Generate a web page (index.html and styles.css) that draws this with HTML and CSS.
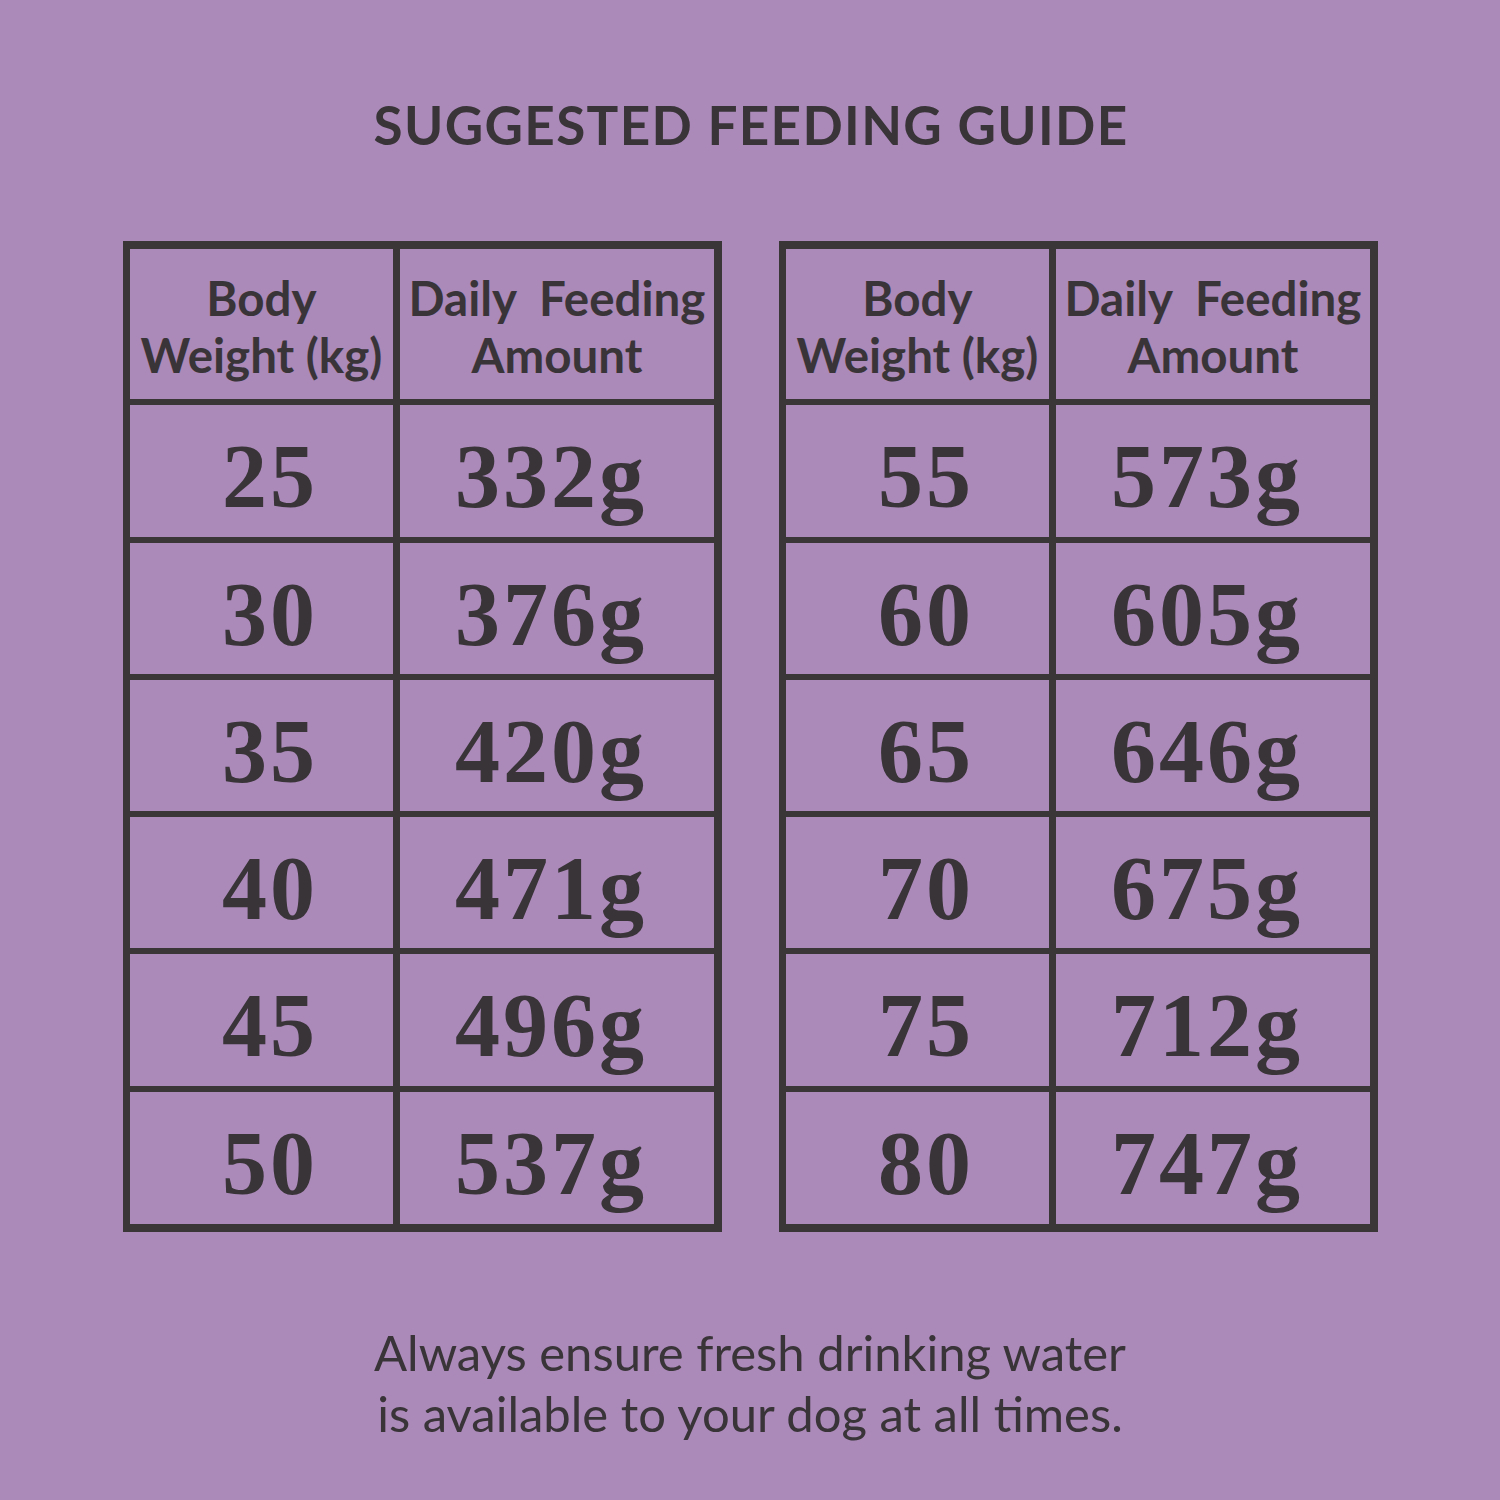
FILE: index.html
```html
<!DOCTYPE html>
<html>
<head>
<meta charset="utf-8">
<link rel="stylesheet" href="styles.css">
</head>
<body>
<div class="page">
  <h1 class="title">SUGGESTED FEEDING GUIDE</h1>
  <div class="tables">
    <div class="grid">
      <div class="cell head c1">Body<br>Weight (kg)</div>
      <div class="cell head c2">Daily&nbsp; Feeding<br>Amount</div>
      <div class="cell num c1">25</div><div class="cell num c2">332g</div>
      <div class="cell num c1">30</div><div class="cell num c2">376g</div>
      <div class="cell num c1">35</div><div class="cell num c2">420g</div>
      <div class="cell num c1">40</div><div class="cell num c2">471g</div>
      <div class="cell num c1">45</div><div class="cell num c2">496g</div>
      <div class="cell num c1">50</div><div class="cell num c2">537g</div>
    </div>
    <div class="grid">
      <div class="cell head c1">Body<br>Weight (kg)</div>
      <div class="cell head c2">Daily&nbsp; Feeding<br>Amount</div>
      <div class="cell num c1">55</div><div class="cell num c2">573g</div>
      <div class="cell num c1">60</div><div class="cell num c2">605g</div>
      <div class="cell num c1">65</div><div class="cell num c2">646g</div>
      <div class="cell num c1">70</div><div class="cell num c2">675g</div>
      <div class="cell num c1">75</div><div class="cell num c2">712g</div>
      <div class="cell num c1">80</div><div class="cell num c2">747g</div>
    </div>
  </div>
  <p class="note">Always ensure fresh drinking water<br>is available to your dog at all times.</p>
</div>
</body>
</html>
```

FILE: styles.css
```css
html, body {
  margin: 0;
  padding: 0;
}
body {
  background: #ab89b9;
  color: #393438;
}
.page {
  width: 1500px;
  height: 1500px;
  display: flex;
  flex-direction: column;
  align-items: center;
}
.title {
  margin: 95px 0 0 0;
  padding-left: 2px;
  font-family: "Lato", "Liberation Sans", sans-serif;
  font-weight: 700;
  font-size: 53px;
  line-height: 60px;
  letter-spacing: 1.35px;
  color: #393438;
}
.tables {
  margin-top: 86px;
  display: flex;
  gap: 57px;
  padding-left: 1px;
}
.grid {
  display: grid;
  grid-template-columns: 263px 314px;
  grid-template-rows: 150px 132px 131px 131px 131px 132px 132px;
  column-gap: 7px;
  row-gap: 6px;
  padding: 8px 8px 8px 7px;
  background: #3a3637;
}
.cell {
  background: #ab89b9;
  display: flex;
  align-items: center;
  justify-content: center;
  text-align: center;
}
.head {
  font-family: "Lato", "Liberation Sans", sans-serif;
  font-weight: 700;
  font-size: 47.5px;
  line-height: 57px;
  padding-top: 4px;
}
.head.c1 {
  padding-left: 0;
}
.num {
  font-family: "Liberation Serif", serif;
  font-weight: 700;
  font-size: 90px;
  line-height: 1;
  letter-spacing: 3px;
  padding-top: 12px;
}
.num.c1 {
  padding-left: 17px;
}
.num.c2 {
  padding-right: 12px;
}
.note {
  margin: 90px 0 0 0;
  padding-left: 0;
  font-family: "Lato", "Liberation Sans", sans-serif;
  font-weight: 400;
  font-size: 49px;
  line-height: 61px;
  text-align: center;
  color: #393438;
}
```
